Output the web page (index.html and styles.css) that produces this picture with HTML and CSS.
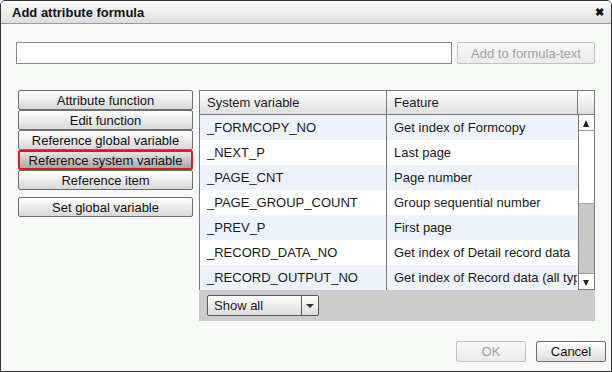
FILE: index.html
```html
<!DOCTYPE html>
<html lang="en">
<head>
    <meta charset="UTF-8">
    <title>Add attribute formula</title>
    <link rel="stylesheet" href="styles.css">
</head>
<body>
    <div class="dialog">
        <div class="titlebar">
            <span>Add attribute formula</span>
            <span class="close">&#x2716;</span>
        </div>

        <div class="dialog-body">
            <div class="formula-row">
                <input type="text" class="formula-input">
                <button class="btn" disabled>Add to formula-text</button>
            </div>

            <div class="main">
                <div class="side">
                    <div class="side-group">
                        <button class="side-btn">Attribute function</button>
                        <button class="side-btn">Edit function</button>
                        <button class="side-btn">Reference global variable</button>
                        <button class="side-btn selected">Reference system variable</button>
                        <button class="side-btn">Reference item</button>
                    </div>
                    <button class="side-btn single">Set global variable</button>
                </div>

                <div class="grid-wrap">
                    <div class="grid">
                        <div class="grid-head">
                            <div class="cell col-var">System variable</div>
                            <div class="cell col-feat">Feature</div>
                            <div class="head-spacer"></div>
                        </div>
                        <div class="grid-body">
                            <div class="rows">
                                <div class="row"><div class="cell col-var">_FORMCOPY_NO</div><div class="cell col-feat">Get index of Formcopy</div></div>
                                <div class="row"><div class="cell col-var">_NEXT_P</div><div class="cell col-feat">Last page</div></div>
                                <div class="row"><div class="cell col-var">_PAGE_CNT</div><div class="cell col-feat">Page number</div></div>
                                <div class="row"><div class="cell col-var">_PAGE_GROUP_COUNT</div><div class="cell col-feat">Group sequential number</div></div>
                                <div class="row"><div class="cell col-var">_PREV_P</div><div class="cell col-feat">First page</div></div>
                                <div class="row"><div class="cell col-var">_RECORD_DATA_NO</div><div class="cell col-feat">Get index of Detail record data</div></div>
                                <div class="row"><div class="cell col-var">_RECORD_OUTPUT_NO</div><div class="cell col-feat">Get index of Record data (all types)</div></div>
                            </div>
                            <div class="scrollbar">
                                <div class="arrow up"></div>
                                <div class="track">
                                    <div class="thumb"></div>
                                </div>
                                <div class="arrow down"></div>
                            </div>
                        </div>
                    </div>
                    <div class="grid-foot">
                        <div class="select">
                            <span class="select-text">Show all</span>
                            <span class="select-btn"></span>
                        </div>
                    </div>
                </div>
            </div>
        </div>

        <div class="dialog-foot">
            <button class="btn foot-btn" disabled>OK</button>
            <button class="btn foot-btn">Cancel</button>
        </div>
    </div>
</body>
</html>
```

FILE: styles.css
```css
* {
    box-sizing: border-box;
}

body {
    margin: 0;
    font-family: "Liberation Sans", Arial, sans-serif;
    font-size: 13px;
    color: #1a1a1a;
    background: #ffffff;
}

.dialog {
    width: 612px;
    height: 372px;
    border: 1px solid #333333;
    border-radius: 5px 5px 0 0;
    background: #f7f9f7;
    display: flex;
    flex-direction: column;
    overflow: hidden;
}

.titlebar {
    height: 23px;
    border-bottom: 1px solid #9a9a9a;
    background: linear-gradient(#ffffff, #dcdcdc);
    display: flex;
    align-items: center;
    justify-content: space-between;
    padding: 0 7px 0 11px;
    font-weight: bold;
    color: #111;
}

.close {
    font-size: 11px;
}

.dialog-body {
    flex: 1;
}

.formula-row {
    display: flex;
    gap: 5px;
    margin-top: 18px;
    padding-left: 15px;
}

.formula-input {
    width: 436px;
    height: 22px;
    border: 1px solid #8a8a8a;
    background: #ffffff;
    margin: 0;
}

.btn {
    font-family: inherit;
    font-size: 13px;
    height: 22px;
    padding: 0;
    border: 1px solid #6e6e6e;
    border-radius: 2px;
    background: linear-gradient(#ffffff, #dddddd);
    color: #111;
}

.btn:disabled {
    border-color: #c2c2c2;
    background: linear-gradient(#f7f7f7, #ebebeb);
    color: #a0a0a0;
}

.formula-row .btn {
    width: 138px;
}

.main {
    display: flex;
    gap: 6px;
    margin-top: 26px;
    padding-left: 17px;
}

.side {
    width: 175px;
    display: flex;
    flex-direction: column;
    gap: 7px;
}

.side-group {
    display: flex;
    flex-direction: column;
}

.side-btn {
    font-family: inherit;
    font-size: 13px;
    height: 20px;
    padding: 0;
    border: 1px solid #6e6e6e;
    border-radius: 2px;
    background: linear-gradient(#ffffff, #d8d8d8);
    color: #111;
}

.side-group .side-btn + .side-btn {
    margin-top: 0;
}

.side-btn.selected {
    border: 2px solid #e01818;
    background: linear-gradient(#e6e6e6, #a8a8a8);
}

.grid-wrap {
    width: 396px;
}

.grid {
    border: 1px solid #7a7a7a;
    background: #ffffff;
}

.grid-head {
    display: flex;
    height: 24px;
    border-bottom: 1px solid #7a7a7a;
    background: linear-gradient(#ffffff, #dedede);
}

.cell {
    padding-left: 7px;
    display: flex;
    align-items: center;
    white-space: nowrap;
    overflow: hidden;
}

.col-var {
    width: 187px;
    border-right: 1px solid #7a7a7a;
}

.col-feat {
    width: 190px;
}

.head-spacer {
    flex: 1;
    border-left: 1px solid #7a7a7a;
}

.grid-body {
    display: flex;
    height: 174px;
}

.rows {
    width: 378px;
}

.row {
    display: flex;
    height: 25px;
}

.row .cell {
    height: 25px;
}

.row:nth-child(odd) {
    background: #edf2fb;
}

.scrollbar {
    flex: 1;
    display: flex;
    flex-direction: column;
    border-left: 1px solid #7a7a7a;
    background: #ffffff;
}

.arrow {
    height: 16px;
    position: relative;
    background: #ffffff;
    border-bottom: 1px solid #9a9a9a;
}

.arrow.down {
    border-bottom: none;
    border-top: 1px solid #9a9a9a;
}

.arrow::after {
    content: "";
    position: absolute;
    left: 4px;
    top: 5px;
    border-left: 3.5px solid transparent;
    border-right: 3.5px solid transparent;
}

.arrow.up::after {
    border-bottom: 7px solid #222;
}

.arrow.down::after {
    top: 6px;
    border-top: 6px solid #222;
}

.track {
    flex: 1;
    display: flex;
    flex-direction: column;
    justify-content: flex-end;
}

.thumb {
    height: 70px;
    background: #c8c8c8;
    border-top: 1px solid #a8a8a8;
}

.grid-foot {
    height: 31px;
    background: #cccccc;
    padding: 5px 0 0 8px;
}

.select {
    width: 112px;
    height: 21px;
    display: flex;
    border: 1px solid #5a5a5a;
    border-radius: 2px;
    background: linear-gradient(#ffffff, #dcdcdc);
}

.select-text {
    flex: 1;
    padding-left: 6px;
    display: flex;
    align-items: center;
}

.select-btn {
    width: 17px;
    border-left: 1px solid #5a5a5a;
    position: relative;
}

.select-btn::after {
    content: "";
    position: absolute;
    left: 4px;
    top: 8px;
    border-left: 4px solid transparent;
    border-right: 4px solid transparent;
    border-top: 4px solid #333;
}

.dialog-foot {
    display: flex;
    justify-content: flex-end;
    gap: 10px;
    padding: 0 5px 9px 0;
}

.foot-btn {
    width: 70px;
    height: 21px;
}
```
